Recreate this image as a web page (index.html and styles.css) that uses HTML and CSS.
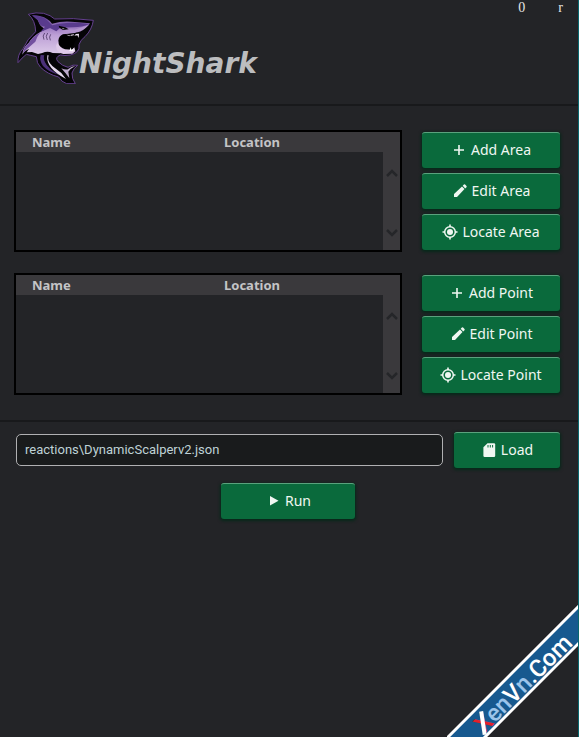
FILE: index.html
```html
<!DOCTYPE html>
<html lang="en">
<head>
    <meta charset="UTF-8">
    <meta name="viewport" content="width=device-width, initial-scale=1.0">
    <title>NightShark</title>
    <link rel="stylesheet" href="styles.css">
</head>
<body>
    <!-- Shared icons -->
    <svg width="0" height="0" class="icon-defs" aria-hidden="true">
        <symbol id="icon-plus" viewBox="0 0 16 16">
            <path d="M8 3v10M3 8h10" fill="none" stroke="currentColor" stroke-width="1.6"/>
        </symbol>
        <symbol id="icon-pencil" viewBox="0 0 16 16">
            <path d="M2 14v-3L10 3.500l2.500 2.500L5 14zM10.700 2.800l1.200-1.200q.6-.5 1.200 0l1.400 1.400q.5.600 0 1.200l-1.300 1.200z" fill="currentColor"/>
        </symbol>
        <symbol id="icon-locate" viewBox="0 0 16 16">
            <circle cx="8" cy="8" r="5.300" fill="none" stroke="currentColor" stroke-width="1.500"/>
            <circle cx="8" cy="8" r="3" fill="currentColor"/>
            <path d="M8 .5v2.500M8 13v2.500M.5 8H3M13 8h2.500" stroke="currentColor" stroke-width="1.600"/>
        </symbol>
        <symbol id="icon-card" viewBox="0 0 16 16">
            <path d="M6.500 1.200H13q1.200 0 1.200 1.200v11.400q0 1.200-1.200 1.200H3.600q-1.200 0-1.200-1.200V5.300z" fill="currentColor"/>
            <path d="M7 3v2.500M9.300 3v2.500M11.600 3v2.500" stroke="#0a6a3c" stroke-width="1"/>
        </symbol>
        <symbol id="icon-play" viewBox="0 0 16 16">
            <path d="M5 3l8.500 4.800L5 12.600z" fill="currentColor"/>
        </symbol>
        <symbol id="icon-up" viewBox="0 0 12 8">
            <path d="M1 7l5-5 5 5" fill="none" stroke="currentColor" stroke-width="2.500"/>
        </symbol>
        <symbol id="icon-down" viewBox="0 0 12 8">
            <path d="M1 1l5 5 5-5" fill="none" stroke="currentColor" stroke-width="2.500"/>
        </symbol>
    </svg>

    <header class="header">
        <div class="brand">
            <svg class="logo" viewBox="21 21 234 216" role="img" aria-label="Shark">
                <defs>
                    <linearGradient id="skin" x1="0" y1="0" x2="0" y2="1">
                        <stop offset="0" stop-color="#5d3d91"/>
                        <stop offset=".3" stop-color="#9a78bf"/>
                        <stop offset=".5" stop-color="#bd9fd6"/>
                        <stop offset="1" stop-color="#dccbe9"/>
                    </linearGradient>
                </defs>
                <path d="M55 28Q78 21 101 25Q123 31 134 42Q188 38 250 46Q246 74 225 95Q211 105 207 119Q211 143 181 150Q164 153 151 150Q133 157 144 170Q157 183 174 187Q190 177 203 181Q190 190 186 204Q185 221 196 236H170Q154 231 146 216Q111 207 91 186Q80 176 79 155Q61 151 49 148Q36 158 24 173Q22 149 39 131Q51 103 77 80Q76 45 55 28Z" fill="#050407" stroke="#64408e" stroke-width="3"/>
                <path d="M67 31Q93 30 111 42Q122 48 126 56Q157 47 185 50L240 55Q233 67 212 76L193 85L158 89Q145 101 145 122L151 145L128 144Q112 137 97 144L84 147L66 141L50 142L57 132Q43 137 37 149Q38 128 56 114Q69 93 91 81L107 72Q92 66 87 54Q82 38 67 31Z" fill="url(#skin)"/>
                <path d="M65 31Q95 32 113 47L127 61Q168 48 238 57Q216 67 190 67L151 68L139 79L120 69L91 81L105 65Q87 64 86 48Z" fill="#593b8d"/>
                <path d="M57 113Q69 94 91 82Q79 98 76 110L51 132L39 145Q40 127 57 113Z" fill="#73509f"/>
                <path d="M170 73L194 74L236 60Q218 80 203 82Q184 80 170 86L153 81Z" fill="#b294cd"/>
                <path d="M146 62L166 67L176 73L159 75L148 68Z" fill="#050407"/>
                <path d="M156 70l8 1-5 2z" fill="#fff"/>
                <path d="M145 107Q147 92 159 88L204 84Q214 86 206 98L196 107L187 130L169 132L151 124Z" fill="#000"/>
                <path d="M169 89l7 1 3 4 4-5 8-1 3 5 3-6 10-1-1 13-4-8-8 1-5-2-3 3-5-3-5 2z" fill="#eee2f0"/>
                <path d="M143 112Q149 128 165 133L186 134L193 127L196 139L187 146L160 147Q139 143 138 122Z" fill="#dfcae9"/>
                <path d="M178 138l4-11 3 9 6-7-1 10z" fill="#fff"/>
                <path d="M104 84Q96 92 102 104M113 84Q105 93 112 105M122 88Q116 96 121 106" fill="none" stroke="#33204d" stroke-width="2"/>
                <path d="M92 150Q87 166 99 183Q115 201 148 210Q113 191 105 172Q99 159 103 151Z" fill="#4b3178"/>
                <path d="M116 151Q110 168 127 183L154 204L168 222Q138 206 124 189Q109 171 112 151Z" fill="#e3d7ec"/>
                <path d="M119 151Q119 168 133 178L158 197" fill="none" stroke="#050407" stroke-width="5"/>
                <path d="M152 190L174 195Q182 185 194 184Q181 193 178 207L185 229Q167 215 165 203Z" fill="#090709"/>
                <path d="M154 190Q170 197 176 191Q185 184 196 183Q182 190 175 200L178 219Q168 206 154 190" fill="#bcaacb"/>
            </svg>
            <h1 class="brand-name">NightShark</h1>
        </div>
        <div class="coords">
            <span>0</span>
            <span>r</span>
        </div>
    </header>

    <main>
        <section class="lists">
            <div class="row">
                <div class="list">
                    <table class="list-table">
                        <thead>
                            <tr>
                                <th>Name</th>
                                <th>Location</th>
                            </tr>
                        </thead>
                        <tbody></tbody>
                    </table>
                    <div class="scrollbar">
                        <button class="scroll-btn" aria-label="Scroll up"><svg><use href="#icon-up"/></svg></button>
                        <button class="scroll-btn" aria-label="Scroll down"><svg><use href="#icon-down"/></svg></button>
                    </div>
                </div>
                <div class="actions">
                    <button class="btn"><svg class="icon"><use href="#icon-plus"/></svg>Add Area</button>
                    <button class="btn"><svg class="icon"><use href="#icon-pencil"/></svg>Edit Area</button>
                    <button class="btn"><svg class="icon"><use href="#icon-locate"/></svg>Locate Area</button>
                </div>
            </div>

            <div class="row">
                <div class="list">
                    <table class="list-table">
                        <thead>
                            <tr>
                                <th>Name</th>
                                <th>Location</th>
                            </tr>
                        </thead>
                        <tbody></tbody>
                    </table>
                    <div class="scrollbar">
                        <button class="scroll-btn" aria-label="Scroll up"><svg><use href="#icon-up"/></svg></button>
                        <button class="scroll-btn" aria-label="Scroll down"><svg><use href="#icon-down"/></svg></button>
                    </div>
                </div>
                <div class="actions">
                    <button class="btn"><svg class="icon"><use href="#icon-plus"/></svg>Add Point</button>
                    <button class="btn"><svg class="icon"><use href="#icon-pencil"/></svg>Edit Point</button>
                    <button class="btn"><svg class="icon"><use href="#icon-locate"/></svg>Locate Point</button>
                </div>
            </div>
        </section>

        <form class="runner" onsubmit="return false">
            <div class="file-row">
                <input class="file-input" type="text" id="file" aria-label="Reaction file" value="reactions\DynamicScalperv2.json">
                <button class="btn btn-load" type="button"><svg class="icon"><use href="#icon-card"/></svg>Load</button>
            </div>
            <button class="btn btn-run" type="submit"><svg class="icon"><use href="#icon-play"/></svg>Run</button>
        </form>
    </main>

    <!-- Corner ribbon -->
    <svg class="ribbon" viewBox="0 0 132 132">
        <path d="M0 132L132 0V38L38 132Z" fill="#17598f"/>
        <path d="M0 133L133 0M37 133L133 37" stroke="#fff" stroke-width="3"/>
        <g transform="translate(37 129) rotate(-45)">
            <text class="ribbon-text" x="0" y="0"><tspan fill="#e3202b">X</tspan><tspan fill="#9cc4ea">en</tspan><tspan fill="#fff">V</tspan><tspan fill="#9cc4ea">n</tspan><tspan fill="#fff">.Com</tspan></text>
            <path d="M0 1L14 -18" stroke="#fff" stroke-width="4"/>
        </g>
    </svg>
</body>
</html>
```
FILE: styles.css
```css
* {
    box-sizing: border-box;
}
body {
    position: relative;
    min-height: 100vh;
    margin: 0;
    background-color: #232427;
    border-right: 1px solid #08676e;
    color: #c4c4c6;
    font-family: "Noto Sans", "Open Sans", sans-serif;
    overflow-x: hidden;
}
.icon-defs {
    position: absolute;
}
.header {
    display: flex;
    justify-content: space-between;
    height: 106px;
    padding: 0 15px 0 17px;
    border-bottom: 2px solid #18191b;
}
.brand {
    display: flex;
    align-items: flex-start;
    padding-top: 12px;
}
.logo {
    width: 78px;
    height: 72px;
    margin-right: -16px;
}
.brand-name {
    margin: 33px 0 0;
    color: #bcbdbf;
    font: italic bold 28px/38px "DejaVu Sans", Verdana, sans-serif;
}
.coords {
    display: flex;
    gap: 33px;
    color: #e6e6e6;
    font: 14px/16px "Liberation Serif", "Times New Roman", serif;
}
.lists {
    display: flex;
    flex-direction: column;
    gap: 21px;
    padding: 24px 18px 25px 14px;
    border-bottom: 2px solid #18191b;
}
.row {
    display: grid;
    grid-template-columns: 1fr 138px;
    gap: 20px;
}
.list {
    display: flex;
    flex-direction: column;
    height: 122px;
    border: 2px solid #000;
}
.list-table {
    width: 100%;
    border-collapse: collapse;
    table-layout: fixed;
    background-color: #3a393c;
}
.list-table th {
    height: 20px;
    padding: 0 16px;
    font-size: 13px;
    line-height: 20px;
    text-align: left;
}
.scrollbar {
    display: flex;
    flex: 1;
    flex-direction: column;
    justify-content: space-between;
    align-self: flex-end;
    width: 17px;
    padding: 13px 0 9px;
    background-color: #3a393c;
}
.scroll-btn {
    display: flex;
    justify-content: center;
    align-items: center;
    height: 16px;
    padding: 0;
    border: 0;
    background: none;
    color: #252629;
}
.scroll-btn svg {
    width: 12px;
    height: 8px;
}
.actions {
    display: flex;
    flex-direction: column;
    gap: 5px;
    padding-top: 2px;
}
.btn {
    display: flex;
    justify-content: center;
    align-items: center;
    gap: 4px;
    height: 36px;
    padding: 0 0 2px;
    border: 0;
    border-top: 1px solid #5aa27d;
    border-radius: 3px;
    background-color: #0a6a3c;
    box-shadow: 0 1px 3px 1px #06291a;
    color: #f0f7f2;
    font: 14px/20px "Noto Sans", "Open Sans", sans-serif;
    cursor: pointer;
}
.btn:hover {
    background-color: #0c7a46;
}
.icon {
    width: 16px;
    height: 16px;
}
.runner {
    padding: 10px 18px 0 16px;
}
.file-row {
    display: grid;
    grid-template-columns: 1fr 106px;
    gap: 11px;
    align-items: center;
}
.file-input {
    width: 100%;
    height: 32px;
    padding: 0 8px 1px;
    border: 1px solid #b0b0b2;
    border-radius: 5px;
    background-color: #191b1c;
    color: #bfd2d6;
    font: 13px/18px Roboto, "Liberation Sans", Arial, sans-serif;
}
.btn-run {
    width: 134px;
    margin: 15px auto 0;
}
.ribbon {
    position: absolute;
    right: -1px;
    bottom: 0;
    width: 132px;
    height: 132px;
}
.ribbon-text {
    font: 500 24px Roboto, sans-serif;
}
```
